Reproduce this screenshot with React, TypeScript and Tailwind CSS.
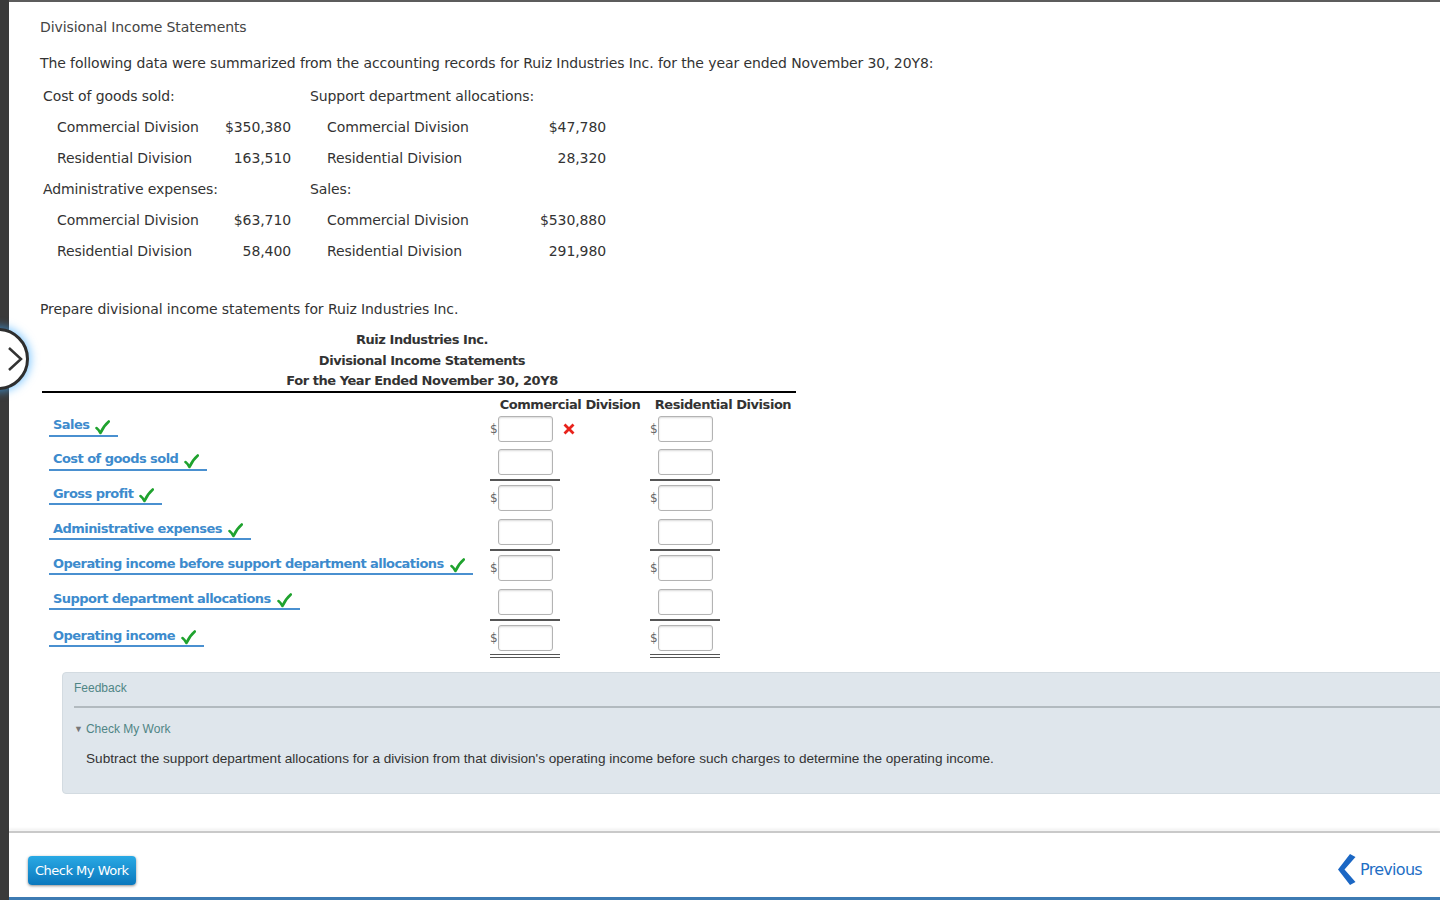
import React from 'react';

const font = { fontFamily: '"DejaVu Sans", Verdana, sans-serif' };
const arial = { fontFamily: '"Liberation Sans", Arial, sans-serif' };

const dataRows = [
  { kind: 'head', a: 'Cost of goods sold:', b: 'Support department allocations:' },
  { kind: 'item', a: 'Commercial Division', av: '$350,380', b: 'Commercial Division', bv: '$47,780' },
  { kind: 'item', a: 'Residential Division', av: '163,510', b: 'Residential Division', bv: '28,320' },
  { kind: 'head', a: 'Administrative expenses:', b: 'Sales:' },
  { kind: 'item', a: 'Commercial Division', av: '$63,710', b: 'Commercial Division', bv: '$530,880' },
  { kind: 'item', a: 'Residential Division', av: '58,400', b: 'Residential Division', bv: '291,980' },
];

const stmtRows = [
  { label: 'Sales', dollar: true, h: 'h-[32px]', rule: '', wrong: true },
  { label: 'Cost of goods sold', dollar: false, h: 'h-[36px]', rule: 'border-b-2 border-[#555]' },
  { label: 'Gross profit', dollar: true, h: 'h-[33px]', rule: '' },
  { label: 'Administrative expenses', dollar: false, h: 'h-[37px]', rule: 'border-b-2 border-[#555]' },
  { label: 'Operating income before support department allocations', dollar: true, h: 'h-[33px]', rule: '' },
  { label: 'Support department allocations', dollar: false, h: 'h-[37px]', rule: 'border-b-2 border-[#555]' },
  { label: 'Operating income', dollar: true, h: 'h-[37px]', rule: 'border-b-[4px] border-double border-[#555]' },
];

function Check() {
  return (
    <svg width="15" height="15" viewBox="0 0 15 15" className="ml-[6px] mt-[5px]">
      <path d="M1.5 8 Q3.5 9.5 5.5 13 Q8.5 6 13.8 1.5" fill="none" stroke="#1fa22e" strokeWidth="2.6" strokeLinecap="round" strokeLinejoin="round" />
    </svg>
  );
}

function Cell({ dollar, rule, wrong }: { dollar: boolean; rule: string; wrong?: boolean }) {
  return (
    <div className="flex h-full items-center">
      <div className={`flex h-full w-[70px] items-center ${rule}`}>
        <span className="w-[8px] text-[12px] leading-none text-[#666]">{dollar ? '$' : ''}</span>
        <div className="h-[26px] w-[55px] rounded-[3px] border border-[#b3b3b3] bg-white shadow-[inset_0_1px_2px_rgba(0,0,0,0.15)]" />
      </div>
      {wrong && (
        <svg width="12" height="12" viewBox="0 0 12 12" className="ml-[3px]">
          <path d="M1.5 1.5 L10.5 10.5 M10.5 1.5 L1.5 10.5" stroke="#e8221b" strokeWidth="2.8" />
        </svg>
      )}
    </div>
  );
}

export default function App() {
  return (
    <div className="relative flex h-[900px] w-[1440px] overflow-hidden bg-white text-[#333]" style={font}>
      <div className="w-[9px] shrink-0 bg-[#3a3a3a]" />
      <div className="flex min-w-0 flex-1 flex-col">
        <div className="h-[2px] bg-[#5c5c5c]" />
        <main className="flex-1 overflow-hidden pl-[31px] pt-[15px]">
          <div className="text-[14px] leading-[20px] tracking-[-0.1px] text-[#444]">Divisional Income Statements</div>
          <div className="mt-[16px] text-[14px] leading-[20px] tracking-[-0.1px]">
            The following data were summarized from the accounting records for Ruiz Industries Inc. for the year ended November 30, 20Y8:
          </div>

          <div className="ml-[3px] mt-[8px] text-[14px] tracking-[-0.1px]">
            {dataRows.map((r, i) => (
              <div key={i} className="flex h-[31px] items-center">
                {r.kind === 'head' ? (
                  <>
                    <div className="w-[267px]">{r.a}</div>
                    <div>{r.b}</div>
                  </>
                ) : (
                  <>
                    <div className="flex w-[248px] pl-[14px]">
                      <span>{r.a}</span>
                      <span className="flex-1 text-right">{r.av}</span>
                    </div>
                    <div className="ml-[19px] flex w-[296px] pl-[17px]">
                      <span>{r.b}</span>
                      <span className="flex-1 text-right">{r.bv}</span>
                    </div>
                  </>
                )}
              </div>
            ))}
          </div>

          <div className="mt-[32px] text-[14px] leading-[20px] tracking-[-0.1px]">Prepare divisional income statements for Ruiz Industries Inc.</div>

          <div className="ml-[2px] mt-[11px] w-[754px]">
            <div className="border-b-2 border-black pl-[6px] text-center text-[13px] font-bold leading-[20px] tracking-[-0.45px]">
              <div>Ruiz Industries Inc.</div>
              <div className="mt-[1px]">Divisional Income Statements</div>
              <div>For the Year Ended November 30, 20Y8</div>
            </div>
            <div className="flex h-[20px] pt-[4px] text-[13px] font-bold leading-[16px] tracking-[-0.45px]">
              <div className="w-[448px]" />
              <div className="w-[160px] text-center">Commercial Division</div>
              <div className="w-[146px] text-center">Residential Division</div>
            </div>
            {stmtRows.map((r) => (
              <div key={r.label} className={`flex ${r.h}`}>
                <div className="flex w-[448px] items-center">
                  <div className="mb-[7px] ml-[7px] flex items-center whitespace-nowrap border-b-2 border-[#4a90d0] pl-[4px] pr-[8px] text-[13px] font-bold leading-[17px] tracking-[-0.55px] text-[#3d8bcd]">
                    <span>{r.label}</span>
                    <Check />
                  </div>
                </div>
                <div className="w-[160px]">
                  <Cell dollar={r.dollar} rule={r.rule} wrong={r.wrong} />
                </div>
                <div className="w-[146px]">
                  <Cell dollar={r.dollar} rule={r.rule} />
                </div>
              </div>
            ))}
          </div>

          <div className="ml-[22px] mt-[14px] w-[1400px] rounded-l-[4px] border border-[#d3dbe1] bg-[#dfe6ec] pb-[25px] pl-[11px] pt-[7px]" style={arial}>
            <div className="text-[12px] leading-[16px] text-[#4f8585]">Feedback</div>
            <div className="mt-[10px] h-[2px] bg-[#b2babf]" />
            <div className="mt-[13px] flex items-center text-[12px] leading-[16px] text-[#4f8585]">
              <span className="mr-[3px] text-[9px] text-[#777]">▼</span>
              <span>Check My Work</span>
            </div>
            <div className="mt-[13px] pl-[12px] text-[13.6px] leading-[18px] text-[#333]">
              Subtract the support department allocations for a division from that division's operating income before such charges to determine the operating income.
            </div>
          </div>
        </main>
        <div className="h-[2px] bg-[#c9c9c9] shadow-[0_-2px_3px_rgba(0,0,0,0.08)]" />
        <footer className="flex h-[64px] items-start justify-between pl-[19px] pr-[18px]">
          <button className="mt-[23px] h-[29px] rounded-[4px] bg-gradient-to-b from-[#29a9e4] to-[#0a78bd] px-[7px] text-[13px] tracking-[-0.5px] text-white shadow-[0_1px_3px_rgba(0,0,0,0.45)]">
            Check My Work
          </button>
          <div className="mt-[21px] flex items-center text-[#1f6fc5]">
            <svg width="19" height="31" viewBox="0 0 19 31">
              <path d="M13 0 L18.5 3 L7.5 15.5 L18.5 28 L13 31 L1 15.5 Z" fill="#1b67c4" />
            </svg>
            <span className="ml-[4px] text-[16px] leading-[20px] tracking-[-0.7px]">Previous</span>
          </div>
        </footer>
        <div className="h-[3px] bg-[#3d7bb3]" />
      </div>

      <div className="absolute left-[-33px] top-[328px] flex h-[62px] w-[62px] items-center justify-center rounded-full border-[3px] border-[#2e2e2e] bg-white shadow-[0_0_8px_2px_rgba(60,170,255,0.6)]">
        <svg width="16" height="26" viewBox="0 0 16 26" className="ml-[34px]">
          <path d="M2 2 L14 13 L2 24" fill="none" stroke="#333" strokeWidth="2.5" />
        </svg>
      </div>
    </div>
  );
}
